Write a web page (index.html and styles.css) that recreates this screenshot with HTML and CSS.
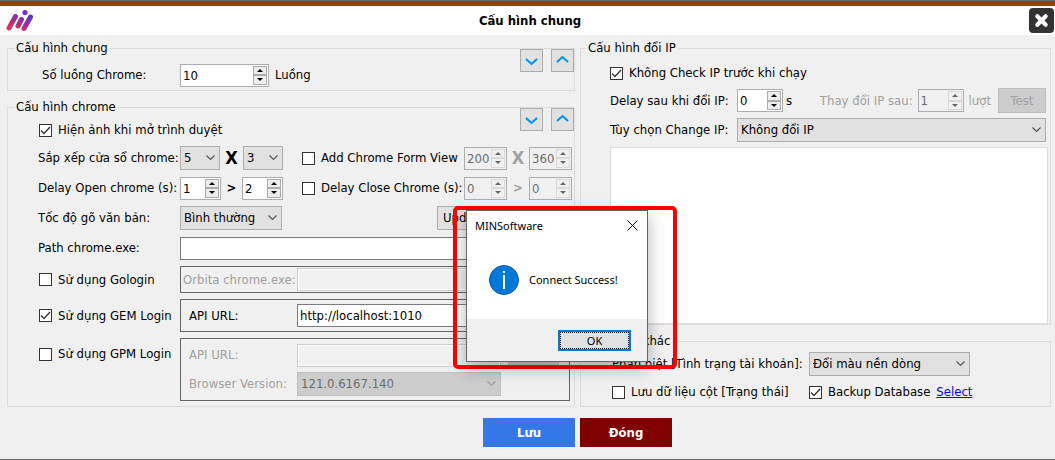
FILE: index.html
```html
<!DOCTYPE html>
<html lang="vi">
<head>
<meta charset="utf-8">
<title>Cấu hình chung</title>
<link rel="stylesheet" href="styles.css">
</head>
<body>
<header class="titlebar">
  <svg class="logo" viewBox="0 0 28 22" aria-hidden="true">
    <defs>
      <linearGradient id="brand" x1="0" y1="22" x2="12" y2="0" gradientUnits="userSpaceOnUse">
        <stop offset="0" stop-color="#f03a3f"/><stop offset=".5" stop-color="#b0307c"/><stop offset="1" stop-color="#5b33cc"/>
      </linearGradient>
      <linearGradient id="brand2" x1="14" y1="22" x2="25" y2="4" gradientUnits="userSpaceOnUse">
        <stop offset="0" stop-color="#e0365a"/><stop offset=".5" stop-color="#8c2fa0"/><stop offset="1" stop-color="#5533dd"/>
      </linearGradient>
    </defs>
    <g fill="none" stroke-width="5" stroke-linecap="round">
      <path d="M3 18 9.500 6.500" stroke="url(#brand)"/>
      <path d="M12 16 15.500 9.500" stroke="url(#brand)"/>
      <path d="M18 18.500 24.500 7" stroke="url(#brand2)"/>
    </g>
    <circle cx="19" cy="2.600" r="2.600" fill="#6a35cc"/>
  </svg>
  <h1 class="title">Cấu hình chung</h1>
  <button class="close" type="button" aria-label="Đóng cửa sổ">
    <svg viewBox="0 0 24 24" aria-hidden="true"><path d="M8 8 16 16M16 8 8 16" stroke="#fff" stroke-width="4" stroke-linecap="round"/></svg>
  </button>
</header>

<main class="columns">
  <div class="column">
    <fieldset class="group group-threads">
      <legend>Cấu hình chung</legend>
      <div class="folds">
        <button class="fold" type="button" aria-label="Mở rộng"><svg viewBox="0 0 21 21"><path d="M5 9 10.500 14 16 9"/></svg></button>
        <button class="fold" type="button" aria-label="Thu gọn"><svg viewBox="0 0 21 21"><path d="M5 12 10.500 7 16 12"/></svg></button>
      </div>
      <div class="row">
        <label class="indent" for="threads">Số luồng Chrome:</label>
        <div class="inline">
          <span class="spin spin-wide"><input id="threads" type="text" value="10"><span class="arrows"><button type="button" class="up" aria-label="Tăng"></button><button type="button" class="down" aria-label="Giảm"></button></span></span>
          <span>Luồng</span>
        </div>
      </div>
    </fieldset>

    <fieldset class="group group-chrome">
      <legend>Cấu hình chrome</legend>
      <div class="folds">
        <button class="fold" type="button" aria-label="Mở rộng"><svg viewBox="0 0 21 21"><path d="M5 9 10.500 14 16 9"/></svg></button>
        <button class="fold" type="button" aria-label="Thu gọn"><svg viewBox="0 0 21 21"><path d="M5 12 10.500 7 16 12"/></svg></button>
      </div>
      <label class="check check-line"><input type="checkbox" checked>Hiện ảnh khi mở trình duyệt</label>
      <div class="row row-pair">
        <label for="cols">Sắp xếp cửa sổ chrome:</label>
        <div class="pair">
          <select id="cols" class="small"><option>5</option></select>
          <b class="times">X</b>
          <select class="small" aria-label="Số hàng"><option>3</option></select>
        </div>
        <label class="check"><input type="checkbox">Add Chrome Form View</label>
        <div class="pair off">
          <span class="spin"><input type="text" value="200" disabled aria-label="Rộng"><span class="arrows"><button type="button" class="up" disabled aria-label="Tăng"></button><button type="button" class="down" disabled aria-label="Giảm"></button></span></span>
          <b class="times">X</b>
          <span class="spin"><input type="text" value="360" disabled aria-label="Cao"><span class="arrows"><button type="button" class="up" disabled aria-label="Tăng"></button><button type="button" class="down" disabled aria-label="Giảm"></button></span></span>
        </div>
      </div>
      <div class="row row-pair">
        <label for="open-min">Delay Open chrome (s):</label>
        <div class="pair">
          <span class="spin"><input id="open-min" type="text" value="1"><span class="arrows"><button type="button" class="up" aria-label="Tăng"></button><button type="button" class="down" aria-label="Giảm"></button></span></span>
          <b>&gt;</b>
          <span class="spin"><input type="text" value="2" aria-label="Delay mở tối đa"><span class="arrows"><button type="button" class="up" aria-label="Tăng"></button><button type="button" class="down" aria-label="Giảm"></button></span></span>
        </div>
        <label class="check"><input type="checkbox">Delay Close Chrome (s):</label>
        <div class="pair off">
          <span class="spin"><input type="text" value="0" disabled aria-label="Delay đóng tối thiểu"><span class="arrows"><button type="button" class="up" disabled aria-label="Tăng"></button><button type="button" class="down" disabled aria-label="Giảm"></button></span></span>
          <b>&gt;</b>
          <span class="spin"><input type="text" value="0" disabled aria-label="Delay đóng tối đa"><span class="arrows"><button type="button" class="up" disabled aria-label="Tăng"></button><button type="button" class="down" disabled aria-label="Giảm"></button></span></span>
        </div>
      </div>
      <div class="row">
        <label for="speed">Tốc độ gõ văn bản:</label>
        <div class="inline spread">
          <select id="speed" class="medium"><option>Bình thường</option></select>
          <button class="plain update" type="button">Update</button>
        </div>
      </div>
      <div class="row">
        <label for="path">Path chrome.exe:</label>
        <input id="path" class="text" type="text">
      </div>
      <div class="row">
        <label class="check"><input type="checkbox">Sử dụng Gologin</label>
        <div class="panel panel-tight off">
          <label for="orbita">Orbita chrome.exe:</label>
          <input id="orbita" class="text" type="text" disabled>
        </div>
      </div>
      <div class="row">
        <label class="check"><input type="checkbox" checked>Sử dụng GEM Login</label>
        <div class="panel">
          <label for="gem-url">API URL:</label>
          <input id="gem-url" class="text" type="text" value="http://localhost:1010">
        </div>
      </div>
      <div class="row row-top">
        <label class="check"><input type="checkbox">Sử dụng GPM Login</label>
        <div class="panel off">
          <label for="gpm-url">API URL:</label>
          <input id="gpm-url" class="text" type="text" disabled>
          <button class="plain" type="button" disabled aria-label="Test"></button>
          <label for="version">Browser Version:</label>
          <select id="version" disabled><option>121.0.6167.140</option></select>
        </div>
      </div>
    </fieldset>
  </div>

  <div class="column">
    <fieldset class="group group-ip">
      <legend>Cấu hình đổi IP</legend>
      <label class="check check-line"><input type="checkbox" checked>Không Check IP trước khi chạy</label>
      <div class="row row-ip">
        <label for="ip-delay">Delay sau khi đổi IP:</label>
        <div class="inline ip-fields">
          <span class="spin"><input id="ip-delay" type="text" value="0"><span class="arrows"><button type="button" class="up" aria-label="Tăng"></button><button type="button" class="down" aria-label="Giảm"></button></span></span>
          <span>s</span>
          <div class="inline off ip-change">
            <label for="ip-count">Thay đổi IP sau:</label>
            <span class="spin"><input id="ip-count" type="text" value="1" disabled><span class="arrows"><button type="button" class="up" disabled aria-label="Tăng"></button><button type="button" class="down" disabled aria-label="Giảm"></button></span></span>
            <span>lượt</span>
            <button class="plain test" type="button" disabled>Test</button>
          </div>
        </div>
      </div>
      <div class="row row-ip">
        <label for="ip-mode">Tùy chọn Change IP:</label>
        <select id="ip-mode"><option>Không đổi IP</option></select>
      </div>
      <textarea class="log" aria-label="Danh sách IP"></textarea>
    </fieldset>

    <fieldset class="group group-other">
      <legend>Cấu hình khác</legend>
      <div class="row row-other">
        <label for="status-mode">Phân biệt [Tình trạng tài khoản]:</label>
        <select id="status-mode" class="large"><option>Đổi màu nền dòng</option></select>
      </div>
      <div class="row row-other">
        <label class="check"><input type="checkbox">Lưu dữ liệu cột [Trạng thái]</label>
        <div class="inline backup">
          <label class="check"><input type="checkbox" checked>Backup Database</label>
          <a href="#">Select</a>
        </div>
      </div>
    </fieldset>
  </div>
</main>

<footer class="actions">
  <button class="action save" type="button">Lưu</button>
  <button class="action cancel" type="button">Đóng</button>
</footer>

<div class="highlight">
  <section class="dialog" role="dialog" aria-labelledby="dialog-title">
    <div class="dialog-head">
      <span id="dialog-title">MINSoftware</span>
      <button class="dialog-close" type="button" aria-label="Close"><svg viewBox="0 0 11 11"><path d="M0.500 0.500 10.500 10.500M10.500 0.500 0.500 10.500"/></svg></button>
    </div>
    <div class="dialog-body">
      <svg class="info" viewBox="0 0 30 30" aria-hidden="true"><circle cx="15" cy="15" r="14.500" fill="#0078d7" stroke="#0a5ca3"/><path d="M14 6h2v2h-2zM14 10h2v14h-2z" fill="#fff"/></svg>
      <span>Connect Success!</span>
    </div>
    <div class="dialog-foot"><button class="ok" type="button"><span>OK</span></button></div>
  </section>
</div>
</body>
</html>
```
FILE: styles.css
```css
* { box-sizing: border-box; }

body {
  margin: 0;
  min-height: 100vh;
  display: flex;
  flex-direction: column;
  position: relative;
  background: #f0f0f0;
  border-top: 1px solid #696969;
  border-bottom: 1px solid #696969;
  color: #000;
  font: 13px/16px "DejaVu Sans Condensed", "Noto Sans", sans-serif;
}

button, input, select, textarea {
  font: inherit;
  color: inherit;
  margin: 0;
  padding: 0;
  border-radius: 0;
}

/* Title bar */
.titlebar {
  display: grid;
  grid-template-columns: 1fr auto 1fr;
  align-items: center;
  height: 34px;
  padding: 0 1px 0 6px;
  background: #fff;
  border-top: 5px solid #8b4513;
}
.logo { width: 28px; height: 22px; }
.title { margin: 0; font-size: 13px; font-weight: bold; }
.close {
  justify-self: end;
  width: 25px;
  height: 25px;
  border: 0;
  border-radius: 4px;
  background: #333;
}
.close svg { display: block; width: 25px; height: 25px; }

/* Group boxes */
.columns, .actions {
  display: grid;
  grid-template-columns: minmax(0, 568fr) minmax(0, 471fr);
  gap: 5px;
  padding: 5px 4px 0 7px;
}
.column { display: flex; flex-direction: column; gap: 8px; }
.group {
  position: relative;
  margin: 0;
  min-width: 0;
  border: 1px solid #dcdcdc;
}
.group legend { padding: 0 2px; margin-left: -24px; height: 16px; }
.group-threads { padding: 7px 4px 3px 30px; }
.group-chrome { padding: 5px 4px 5px 30px; display: flex; flex-direction: column; gap: 6px; }
.group-ip { padding: 7px 2px 0 29px; flex: 1; display: flex; flex-direction: column; gap: 5px; }
.group-other { padding: 3px 4px 3px 31px; display: flex; flex-direction: column; gap: 5px; }
.group-other legend { margin-left: -27px; }

.folds { position: absolute; top: -7px; right: 0; display: flex; gap: 8px; }
.fold { width: 23px; height: 23px; border: 1px solid #adadad; background: #e1e1e1; }
.fold svg { display: block; width: 21px; height: 21px; fill: none; stroke: #0090f0; stroke-width: 2; }

/* Rows */
.row { display: grid; grid-template-columns: 142px 1fr; align-items: center; min-height: 24px; white-space: nowrap; }
.row-pair { grid-template-columns: 142px 103px 1fr 108px; margin-right: -2px; }
.row-pair > .check { padding-left: 18px; }
.row-ip { grid-template-columns: 127px 1fr; padding-right: 2px; }
.row-other { grid-template-columns: 197px 1fr; min-height: 22px; }
.row-top { align-items: start; }
.row-top > .check { padding-top: 8px; }
.indent { padding-left: 4px; }
.inline { display: flex; align-items: center; gap: 6px; }
.spread { justify-content: space-between; }
.pair { display: flex; align-items: center; justify-content: space-between; }
.times { font-size: 18px; }
.off { color: #a0a0a0; }
.ip-fields { gap: 3px; }
.ip-change { margin-left: auto; gap: 5px; }
.backup { gap: 6px; }

.check { display: flex; align-items: center; gap: 6px; }
.check-line { min-height: 20px; }
.check input {
  appearance: none;
  width: 13px;
  height: 13px;
  margin-left: 1px;
  border: 1px solid #333;
  background: #fff;
}
.group-ip .check input, .group-other .check input { margin-left: 0; }
.check input:checked {
  background: #fff url("data:image/svg+xml,%3Csvg xmlns='http://www.w3.org/2000/svg' viewBox='0 0 11 11'%3E%3Cpath d='M1 5.500 4 8.500 10 2' fill='none' stroke='%23333' stroke-width='1.300'/%3E%3C/svg%3E");
}

/* Fields */
.spin { display: flex; width: 41px; height: 23px; padding: 1px; border: 1px solid #abadb3; background: #fff; }
.spin input { flex: 1; width: 0; height: 19px; padding-left: 1px; border: 0; background: none; }
.spin-wide { width: 89px; }
.off .spin { width: 43px; background: #f0f0f0; }
.off .spin input { color: #6d6d6d; }
.row-ip .spin { width: 46px; }
.arrows { display: flex; flex-direction: column; width: 14px; height: 19px; }
.arrows button { flex: 1; display: grid; place-items: center; border: 1px solid #acacac; background: #ececec; }
.arrows button::before { content: ""; border: 3px solid transparent; }
.arrows .up::before { border-top: 0; border-bottom-color: #000; }
.arrows .down::before { border-bottom: 0; border-top-color: #000; }
.off .arrows button { border-color: #d9d9d9; background: #f0f0f0; }
.off .arrows .up::before { border-bottom-color: #666; }
.off .arrows .down::before { border-top-color: #666; }

select {
  appearance: none;
  height: 24px;
  padding-left: 3px;
  border: 1px solid #adadad;
  background: #e1e1e1 url("data:image/svg+xml,%3Csvg xmlns='http://www.w3.org/2000/svg' width='9' height='6'%3E%3Cpath d='M.5.5 4.500 4.500 8.500.5' fill='none' stroke='%23555' stroke-width='1.200'/%3E%3C/svg%3E") no-repeat right 4px center;
}
select:disabled {
  opacity: 1;
  color: #6d6d6d;
  border-color: #bfbfbf;
  background-color: #ccc;
  background-image: url("data:image/svg+xml,%3Csvg xmlns='http://www.w3.org/2000/svg' width='9' height='6'%3E%3Cpath d='M.5.5 4.500 4.500 8.500.5' fill='none' stroke='%23a0a0a0' stroke-width='1.200'/%3E%3C/svg%3E");
}
.small { width: 40px; }
.medium { width: 102px; }
.large { width: 161px; }
.text { width: 100%; height: 23px; padding: 0 2px; border: 1px solid #7a7a7a; background: #fff; }
.text:disabled { border-color: #ccc; background: #f0f0f0; box-shadow: inset 0 0 0 1px #fff; }
.log { flex: 1; width: 100%; resize: none; border: 1px solid #dcdcdc; background: #fff; }

.plain { height: 24px; border: 1px solid #adadad; background: #e1e1e1; }
.plain:disabled { color: #a0a0a0; border-color: #bfbfbf; background: #ccc; }
.update { width: 133px; padding-left: 5px; text-align: left; }
.test { width: 48px; height: 25px; margin-left: 2px; }

.panel {
  display: grid;
  grid-template-columns: 108px 204px 58px;
  align-items: center;
  gap: 5px 0;
  padding: 4px 4px 4px 8px;
  border: 1px solid #646464;
}
.panel .plain { margin-left: 7px; }
.panel-tight { grid-template-columns: 114px 1fr; padding: 1px 4px 1px 2px; }

a { color: #00f; }

/* Bottom actions */
.actions { padding-top: 11px; padding-bottom: 11px; }
.action { width: 92px; height: 29px; border: 0; color: #fff; font-weight: bold; }
.save { justify-self: end; background: #3578e5; }
.cancel { background: #800000; }

/* Message box with its highlight frame */
.highlight {
  position: absolute;
  top: 205px;
  left: 453px;
  width: 224px;
  padding: 0 25px 3px 9px;
  border: 4px solid #f00;
  border-radius: 5px;
}
.dialog {
  border: 1px solid #666;
  background: #fff;
  box-shadow: 0 6px 16px rgba(0, 0, 0, .3);
  font: 11px/16px "Noto Sans", sans-serif;
}
.dialog-head { display: flex; align-items: center; justify-content: space-between; height: 29px; padding: 0 9px 0 8px; }
.dialog-close { border: 0; background: none; line-height: 0; }
.dialog-close svg { width: 11px; height: 11px; stroke: #000; fill: none; }
.dialog-body { display: flex; align-items: center; gap: 10px; height: 79px; padding: 0 0 0 22px; }
.info { width: 30px; height: 30px; }
.dialog-foot { display: flex; justify-content: flex-end; padding: 11px 16px 10px; background: #f0f0f0; }
.ok { width: 73px; height: 21px; border: 2px solid #0078d7; background: #e1e1e1; }
.ok span { display: block; line-height: 15px; border: 1px dotted #000; }
```
